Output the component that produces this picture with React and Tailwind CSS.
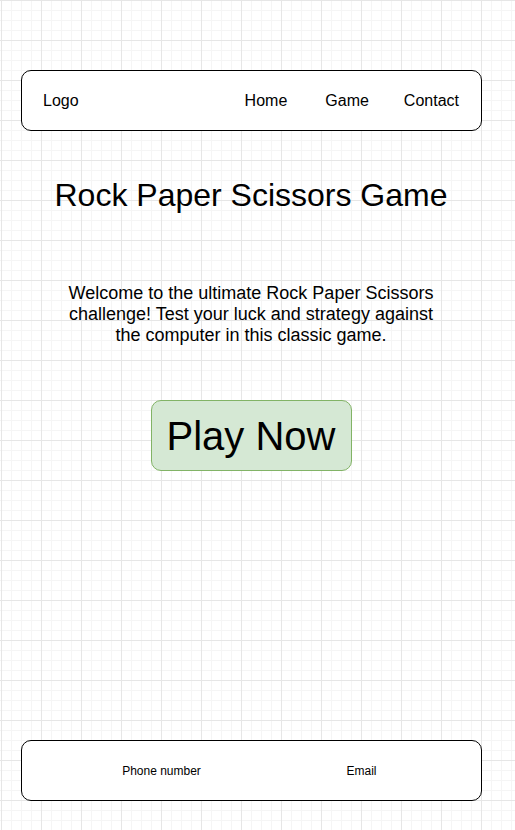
export default function App() {
  const grid = {
    backgroundColor: "#ffffff",
    backgroundImage:
      "linear-gradient(to right, #e6e6e6 1px, transparent 1px), linear-gradient(to bottom, #e6e6e6 1px, transparent 1px), linear-gradient(to right, #f5f5f5 1px, transparent 1px), linear-gradient(to bottom, #f5f5f5 1px, transparent 1px)",
    backgroundSize: "40px 40px, 40px 40px, 10px 10px, 10px 10px",
    backgroundPosition: "1px 0px, 1px 0px, 1px 0px, 1px 0px",
  };
  return (
    <div
      className="w-[515px] h-[830px] overflow-hidden text-black"
      style={{ ...grid, fontFamily: '"Liberation Sans", Arial, sans-serif' }}
    >
      <div className="flex flex-col items-start pt-[70px]">
        <header className="ml-[21px] w-[461px] h-[61px] border border-black rounded-[10px] bg-white flex items-center justify-between pl-[21px] pr-[22px] text-[16px]">
          <span>Logo</span>
          <nav className="flex items-center">
            <span className="mr-[38px]">Home</span>
            <span className="mr-[35px]">Game</span>
            <span>Contact</span>
          </nav>
        </header>
        <h1 className="w-[502px] mt-[46px] text-center text-[32px] leading-[37px]">
          Rock Paper Scissors Game
        </h1>
        <p className="w-[502px] mt-[69px] flex justify-center text-center text-[18px] leading-[21px]">
          <span className="w-[380px]">
            Welcome to the ultimate Rock Paper Scissors challenge! Test your luck and strategy against the computer in this classic game.
          </span>
        </p>
        <div className="w-[502px] mt-[54px] flex justify-center">
          <button className="w-[201px] h-[71px] rounded-[10px] border border-[#82b366] bg-[#d5e8d4] text-[40px] leading-none flex items-center justify-center">
            Play Now
          </button>
        </div>
        <footer className="ml-[21px] mt-[269px] w-[461px] h-[61px] border border-black rounded-[10px] bg-white flex items-center justify-center pl-[20px] text-[12px]">
          <div className="w-[200px] text-center">Phone number</div>
          <div className="w-[200px] text-center">Email</div>
        </footer>
      </div>
    </div>
  );
}
